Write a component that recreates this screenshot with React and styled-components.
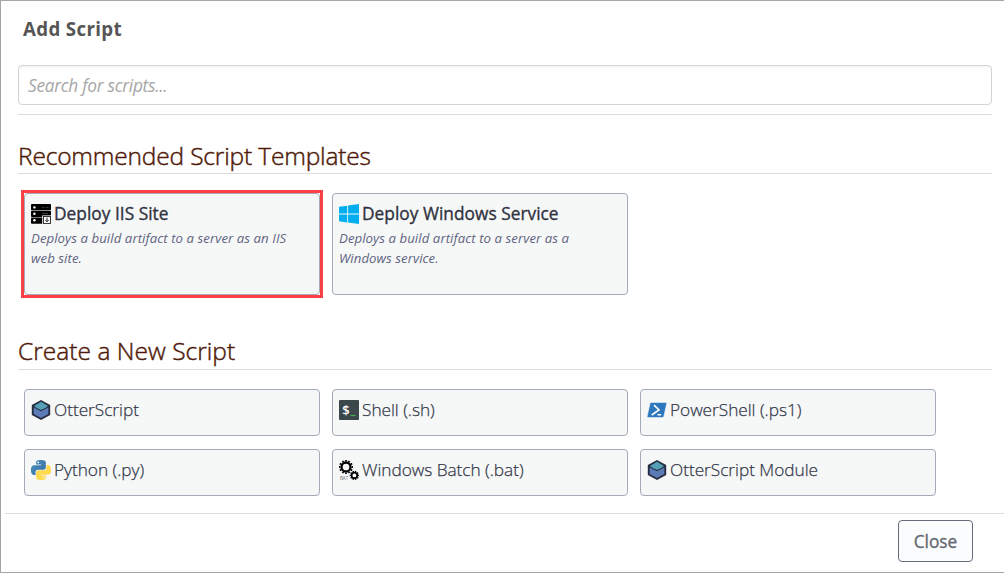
import React from 'react';
import styled, { createGlobalStyle } from 'styled-components';

const GlobalStyle = createGlobalStyle`
  *, *::before, *::after { box-sizing: border-box; }
  body {
    margin: 0;
    background: #fff;
    font-family: "Open Sans", "Noto Sans", sans-serif;
  }
`;

const Dialog = styled.div`
  display: flex;
  flex-direction: column;
  height: 573px;
  border: 1px solid #a6a6a6;
  border-right: 0;
  background: #fff;
  overflow: hidden;
`;

const Content = styled.main`
  display: flex;
  flex-direction: column;
  height: 512px;
  padding: 14px 12px 0 17px;
`;

const Title = styled.h1`
  height: 50px;
  margin: 0;
  padding-left: 5px;
  color: #555;
  font-size: 18.7px;
  font-weight: 700;
  line-height: 28px;
  letter-spacing: 0.35px;
`;

const SearchInput = styled.input`
  width: 100%;
  height: 40px;
  padding: 0 10px 0 9px;
  border: 1px solid #d3d3d9;
  border-radius: 4px;
  box-shadow: inset 0 2px 2px rgba(0, 0, 0, 0.04);
  font: italic 17.3px "Open Sans", "Noto Sans", sans-serif;
  outline: none;

  &::placeholder {
    color: #a6a6a6;
    opacity: 1;
    letter-spacing: -0.28px;
  }
`;

const Divider = styled.hr`
  width: 100%;
  height: 1px;
  margin: 9px 0 0;
  border: 0;
  background: #dcdcdc;
`;

const SectionHeading = styled.h2`
  height: 36px;
  margin: ${(p) => p.$top}px 0 0;
  border-bottom: 1px solid #dcdcdc;
  color: #4f1a08;
  font-size: 24.5px;
  font-weight: 300;
  line-height: ${(p) => p.$line || 36}px;
  letter-spacing: ${(p) => p.$track || 0}px;
  white-space: nowrap;
  -webkit-text-stroke: 0.45px #4f1a08;
`;

const Grid = styled.div`
  display: grid;
  grid-template-columns: repeat(3, 296px);
  grid-auto-rows: ${(p) => p.$row}px;
  gap: 13px 12px;
  padding: 19px 0 0 6px;
`;

const Cell = styled.div`
  display: flex;
  outline: ${(p) => (p.$highlighted ? '3px solid #fc4044' : 'none')};
`;

const Card = styled.button`
  display: flex;
  flex: 1;
  flex-direction: column;
  padding: 10px 6px;
  border: 1px solid #a4aab8;
  border-radius: 4px;
  background: #f6f8f8;
  font-family: inherit;
  text-align: left;
  cursor: pointer;
`;

const CardTitle = styled.span`
  display: flex;
  gap: 3px;
  height: 20px;
  color: ${(p) => (p.$strong ? '#30323f' : '#353849')};
  font-size: 17.3px;
  font-weight: ${(p) => (p.$strong ? 400 : 300)};
  line-height: 20px;
  white-space: nowrap;
  letter-spacing: ${(p) => (p.$strong ? 0.03 : -0.04)}px;

  > span {
    -webkit-text-stroke: ${(p) => (p.$strong ? 0.35 : 0.25)}px currentColor;
  }

  svg {
    display: block;
    flex: none;
  }
`;

const Description = styled.span`
  margin-top: 4px;
  color: #5f6380;
  font-size: 13.2px;
  font-style: italic;
  line-height: 20px;
  letter-spacing: 0.07px;
`;

const Line = styled.span`
  display: block;
  white-space: nowrap;
`;

const Footer = styled.footer`
  display: flex;
  justify-content: flex-end;
  height: 59px;
  margin-left: 4px;
  padding: 6px 31px 0 0;
  border-top: 1px solid #dcdcdc;
`;

const CloseButton = styled.button`
  width: 75px;
  height: 42px;
  padding: 0;
  border: 1px solid #666b7c;
  border-radius: 4px;
  background: #fbfcfd;
  color: #62666f;
  font-family: inherit;
  font-size: 17.3px;
  -webkit-text-stroke: 0.3px currentColor;
`;

const ServerIcon = () => (
  <svg width="20" height="20" viewBox="0 0 20 20">
    <rect width="20" height="6.2" rx="0.8" />
    <rect y="6.8" width="20" height="6.2" rx="0.8" />
    <rect y="13.6" width="20" height="6.2" rx="0.8" />
    <g fill="#fff">
      <circle cx="3.4" cy="3.4" r="1.2" />
      <circle cx="3.4" cy="9.8" r="1.2" />
      <circle cx="3.4" cy="16.3" r="1.3" />
    </g>
    <path d="M11 3.5h2.5M15 3.5h2.5M11 9.5h6" stroke="#444" strokeWidth="0.8" />
    <rect x="11.2" y="11.4" width="9" height="9" fill="#f6f8f8" />
    <rect x="12.5" y="12.5" width="7" height="7" fill="#fff" stroke="#222" strokeWidth="0.9" />
    <path d="M16 13.6v4M14.3 16l1.7 1.8 1.7-1.8" fill="none" stroke="#222" strokeWidth="1" />
  </svg>
);

const WindowsIcon = () => (
  <svg width="20" height="20" viewBox="0 0 20 20" fill="#00adef">
    <path d="M0 2.8 8.2 1.7v7.9H0zM9.1 1.5 20 0v9.6H9.1zM0 10.5h8.2v7.9L0 17.2zM9.1 10.5H20V20L9.1 18.5z" />
  </svg>
);

const OtterIcon = () => (
  <svg width="20" height="20" viewBox="0 0 20 20">
    <path d="M10 0 19.2 5v10L10 20 .8 15V5z" fill="#282c40" />
    <path d="M10 1.800 17 6l-2.600 1.900L10 10 5.600 7.900 3 6z" fill="#54a0b7" />
    <path d="M2.700 7.400 10 11.200l7.300-3.800v6.600L10 18l-7.300-4z" fill="#5b7bb7" />
  </svg>
);

const ShellIcon = () => (
  <svg width="20" height="20" viewBox="0 0 20 20">
    <rect width="20" height="20" rx="1" fill="#3b474a" />
    <text x="3.2" y="14.8" fill="#fff" fontFamily="Open Sans, sans-serif" fontSize="13" fontWeight="600">$</text>
    <path d="M11.5 15.5h5" stroke="#42b64b" strokeWidth="1.2" />
  </svg>
);

const PowerShellIcon = () => (
  <svg width="20" height="20" viewBox="0 0 20 20">
    <path d="M4.3 2.5h14.6q1 0 .8 1l-2.9 13q-.3 1-1.3 1H.9q-1 0-.8-1L3 3.5q.3-1 1.300-1z" fill="#8fb9df" />
    <path d="M4.500 3h14q.8 0 .6.700l-2.800 12.600q-.2.700-1 .700H1.400q-.8 0-.6-.7L3.500 3.700q.2-.7 1-.7z" fill="#2e77bd" />
    <path d="M7 5.200 12 10l-7.300 5M10.500 14.800h3.600" fill="none" stroke="#fff" strokeWidth="1.6" />
  </svg>
);

const PYTHON_HALF =
  'M14.25.18l.9.2.73.26.59.3.45.32.34.34.25.34.16.33.1.3.04.26.02.2-.01.13V8.5l-.05.63-.13.55-.21.46-.26.38-.3.31-.33.25-.35.19-.35.14-.33.1-.3.07-.26.04-.21.02H8.77l-.69.05-.59.14-.5.22-.41.27-.33.32-.27.35-.2.36-.15.37-.1.35-.07.32-.04.27-.02.21v3.06H3.17l-.21-.03-.28-.07-.32-.12-.35-.18-.36-.26-.36-.36-.35-.46-.32-.59-.28-.73-.21-.88-.14-1.05-.05-1.23.06-1.22.16-1.04.24-.87.32-.71.36-.57.4-.44.42-.33.42-.24.4-.16.36-.1.32-.05.24-.01h.16l.06.01h8.16v-.83H6.18l-.01-2.75-.02-.37.05-.34.11-.31.17-.28.25-.26.31-.23.38-.2.44-.18.51-.15.58-.12.64-.1.71-.06.77-.04.84-.02 1.27.05zm-6.3 1.98l-.23.33-.08.41.08.41.23.34.33.22.41.09.41-.09.33-.22.23-.34.08-.41-.08-.41-.23-.33-.33-.22-.41-.09-.41.09z';

const PythonIcon = () => (
  <svg width="20" height="20" viewBox="0 0 24 24">
    <defs>
      <linearGradient id="py-blue" x1="0" y1="0" x2="1" y2="1">
        <stop offset="0" stopColor="#5295c6" />
        <stop offset="1" stopColor="#306b9c" />
      </linearGradient>
    </defs>
    <path d={PYTHON_HALF} fill="url(#py-blue)" />
    <path d={PYTHON_HALF} fill="#ffd94e" transform="rotate(180 12 12)" />
  </svg>
);

const Gear = ({ cx, cy, r, teeth, ring, tooth }) => (
  <g fill="none" stroke="#000">
    <circle cx={cx} cy={cy} r={r} strokeWidth={ring} />
    <circle
      cx={cx}
      cy={cy}
      r={r + ring / 2 + tooth / 2 - 0.1}
      strokeWidth={tooth}
      pathLength={teeth * 2}
      strokeDasharray="1.1 0.9"
      strokeDashoffset="0.55"
    />
  </g>
);

const BatchIcon = () => (
  <svg width="20" height="20" viewBox="0 0 20 20">
    <Gear cx={7} cy={7} r={4.5} teeth={12} ring={2.3} tooth={1.5} />
    <Gear cx={15.4} cy={15.4} r={2.8} teeth={10} ring={1.7} tooth={1.1} />
    <text x="1" y="20" fontFamily="Open Sans, sans-serif" fontSize="4.6" textLength="8">BAT</text>
  </svg>
);

const templates = [
  {
    name: 'Deploy IIS Site',
    icon: ServerIcon,
    lines: ['Deploys a build artifact to a server as an IIS', 'web site.'],
    highlighted: true,
  },
  {
    name: 'Deploy Windows Service',
    icon: WindowsIcon,
    lines: ['Deploys a build artifact to a server as a', 'Windows service.'],
  },
];

const scriptTypes = [
  { name: 'OtterScript', icon: OtterIcon },
  { name: 'Shell (.sh)', icon: ShellIcon },
  { name: 'PowerShell (.ps1)', icon: PowerShellIcon },
  { name: 'Python (.py)', icon: PythonIcon },
  { name: 'Windows Batch (.bat)', icon: BatchIcon },
  { name: 'OtterScript Module', icon: OtterIcon },
];

export default function App() {
  return (
    <>
      <GlobalStyle />
      <Dialog>
        <Content>
          <Title>Add Script</Title>
          <SearchInput placeholder="Search for scripts..." />
          <Divider />
          <SectionHeading $top={23} $track={-0.17}>Recommended Script Templates</SectionHeading>
          <Grid $row={102}>
            {templates.map(({ name, icon: Icon, lines, highlighted }) => (
              <Cell key={name} $highlighted={highlighted}>
                <Card>
                  <CardTitle $strong>
                    <Icon />
                    <span>{name}</span>
                  </CardTitle>
                  <Description>
                    {lines.map((line) => (
                      <Line key={line}>{line}</Line>
                    ))}
                  </Description>
                </Card>
              </Cell>
            ))}
          </Grid>
          <SectionHeading $top={39} $line={34} $track={0.03}>Create a New Script</SectionHeading>
          <Grid $row={47}>
            {scriptTypes.map(({ name, icon: Icon }) => (
              <Cell key={name}>
                <Card>
                  <CardTitle>
                    <Icon />
                    <span>{name}</span>
                  </CardTitle>
                </Card>
              </Cell>
            ))}
          </Grid>
        </Content>
        <Footer>
          <CloseButton>Close</CloseButton>
        </Footer>
      </Dialog>
    </>
  );
}
